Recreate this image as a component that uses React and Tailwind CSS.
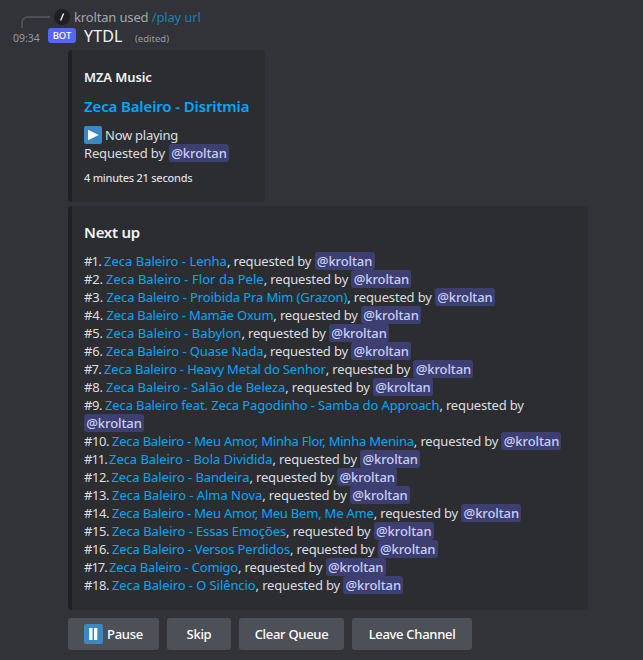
const songs = [
  ["Zeca Baleiro - Lenha", "w-[20px] tracking-[-0.8px]", "tracking-[0px]"],
  ["Zeca Baleiro - Flor da Pele", "w-[22px] tracking-[-0.2px]", "tracking-[0.04px]"],
  ["Zeca Baleiro - Proibida Pra Mim (Grazon)", "w-[22.5px] tracking-[-0.1px]", "tracking-[-0.12px]"],
  ["Zeca Baleiro - Mamãe Oxum", "w-[22.5px] tracking-[-0.1px]", "tracking-[-0.2px]"],
  ["Zeca Baleiro - Babylon", "w-[22px] tracking-[-0.2px]", "tracking-[0.03px]"],
  ["Zeca Baleiro - Quase Nada", "w-[22px] tracking-[-0.2px]", "tracking-[-0.11px]"],
  ["Zeca Baleiro - Heavy Metal do Senhor", "w-[20px] tracking-[-0.8px]", "tracking-[-0.15px]"],
  ["Zeca Baleiro - Salão de Beleza", "w-[22px] tracking-[-0.2px]", "tracking-[-0.03px]"],
  ["Zeca Baleiro feat. Zeca Pagodinho - Samba do Approach", "w-[21px] tracking-[-0.4px]", "tracking-[-0.12px]"],
  ["Zeca Baleiro - Meu Amor, Minha Flor, Minha Menina", "w-[28px] tracking-[-0.45px]", "tracking-[-0.21px]"],
  ["Zeca Baleiro - Bola Dividida", "w-[25px] tracking-[-1px]", "tracking-[-0.06px]"],
  ["Zeca Baleiro - Bandeira", "w-[27.5px] tracking-[-0.45px]", "tracking-[-0.1px]"],
  ["Zeca Baleiro - Alma Nova", "w-[28px] tracking-[-0.45px]", "tracking-[-0.04px]"],
  ["Zeca Baleiro - Meu Amor, Meu Bem, Me Ame", "w-[28px] tracking-[-0.45px]", "tracking-[-0.21px]"],
  ["Zeca Baleiro - Essas Emoções", "w-[28px] tracking-[-0.45px]", "tracking-[-0.1px]"],
  ["Zeca Baleiro - Versos Perdidos", "w-[28px] tracking-[-0.45px]", "tracking-[-0.17px]"],
  ["Zeca Baleiro - Comigo", "w-[25px] tracking-[-1px]", "tracking-[-0.18px]"],
  ["Zeca Baleiro - O Silêncio", "w-[28px] tracking-[-0.45px]", "tracking-[-0.08px]"],
];

function Mention() {
  return (
    <span className="inline-block h-[18px] w-[60px] rounded-[3px] bg-[#3c3f6f] text-center align-top font-medium tracking-[-0.1px] text-[#c9cdfb]">
      @kroltan
    </span>
  );
}

function PlayIcon() {
  return (
    <svg viewBox="0 0 18 18" className="h-[18px] w-[18px] shrink-0">
      <rect width="18" height="18" rx="2" fill="#3b88c3" />
      <path d="M4 3.7v10.6L14.7 9z" fill="#fff" />
    </svg>
  );
}

function PauseIcon() {
  return (
    <svg viewBox="0 0 19 20" className="h-5 w-[19px] shrink-0">
      <rect width="19" height="20" rx="2.2" fill="#3b88c3" />
      <path d="M5.2 4h3.3v12H5.2zM10 4h3.3v12H10z" fill="#fff" />
    </svg>
  );
}

function Button({ className, children }) {
  return (
    <button
      className={`flex h-8 items-center justify-center rounded-[3px] bg-[#4e5058] text-[13px] font-medium tracking-[-0.3px] text-white ${className}`}
    >
      {children}
    </button>
  );
}

export default function App() {
  return (
    <div className="h-[660px] w-[643px] overflow-hidden bg-[#313338] font-['Noto_Sans',sans-serif] text-[13px] leading-[18px] text-[#dbdee1]">
      <div className="flex h-[18px] pt-[8px] pl-[21px]">
        <svg viewBox="0 0 30 12" className="mt-2 h-3 w-[30px] shrink-0" fill="none" stroke="#4e5058" strokeWidth="2">
          <path d="M1 12V7a6 6 0 0 1 6-6h22" />
        </svg>
        <svg viewBox="0 0 16 16" className="mt-px ml-[3px] h-4 w-4 shrink-0">
          <circle cx="8" cy="8" r="8" fill="#1e1f22" />
          <path d="M9.6 4.5 6.6 11.5" stroke="#f2f3f5" strokeWidth="1.4" />
        </svg>
        <span className="ml-1 tracking-[-0.15px] whitespace-pre text-[#a5a7ad]">
          kroltan used <span className="text-[#1b7fb3]">/play url</span>
        </span>
      </div>
      <div className="flex h-8 pt-[8px] pl-[13px] text-[#949ba4]">
        <span className="w-[35px] pt-[3px] text-[10.5px] leading-[18px]">09:34</span>
        <span className="mt-[2px] h-[15px] w-[28px] rounded-[3px] bg-[#5865f2] text-center text-[9.5px] leading-[15px] font-medium text-white">
          BOT
        </span>
        <span className="ml-2 w-[51px] text-[16px] leading-[21px] tracking-[0.15px] text-[#f2f3f5]">YTDL</span>
        <span className="pt-[4px] text-[9.5px] leading-[17px]">(edited)</span>
      </div>

      <div className="ml-[68px]">
        <section className="h-[152px] w-[197px] rounded-[4px] border-l-4 border-[#1e1f22] bg-[#2b2d31] pt-[18px] pl-3">
          <div className="text-[13px] font-semibold tracking-[-0.1px] text-[#f2f3f5]">MZA Music</div>
          <div className="mt-[9px] text-[15px] leading-[22px] font-semibold tracking-[-0.13px] whitespace-nowrap text-[#00a8fc]">
            Zeca Baleiro - Disritmia
          </div>
          <div className="mt-[9px] flex gap-[3px] tracking-[-0.25px]">
            <PlayIcon />
            Now playing
          </div>
          <div className="flex">
            <span className="w-[85px] tracking-[-0.16px]">Requested by</span>
            <Mention />
          </div>
          <div className="mt-2 text-[11px] leading-4 font-medium tracking-[-0.25px]">4 minutes 21 seconds</div>
        </section>

        <section className="mt-1 h-[404px] w-[520px] rounded-[4px] border-l-4 border-[#1e1f22] bg-[#2b2d31] pt-[15px] pl-3">
          <div className="text-[15px] leading-[22px] font-semibold tracking-[-0.25px] text-[#f2f3f5]">Next up</div>
          <div className="mt-[9px] w-[488px]">
            {songs.map(([title, numberStyle, titleStyle], i) => (
              <div key={title} className="tracking-[-0.16px]">
                <span className={`inline-block align-top whitespace-pre ${numberStyle}`}>#{i + 1}. </span>
                <span className={`text-[#00a8fc] ${titleStyle}`}>{title}</span>, requested by <Mention />
              </div>
            ))}
          </div>
        </section>

        <div className="mt-2 flex gap-2">
          <Button className="w-[91px] gap-1">
            <PauseIcon />
            Pause
          </Button>
          <Button className="w-16">Skip</Button>
          <Button className="w-[105px]">Clear Queue</Button>
          <Button className="w-[120px]">Leave Channel</Button>
        </div>
      </div>
    </div>
  );
}
